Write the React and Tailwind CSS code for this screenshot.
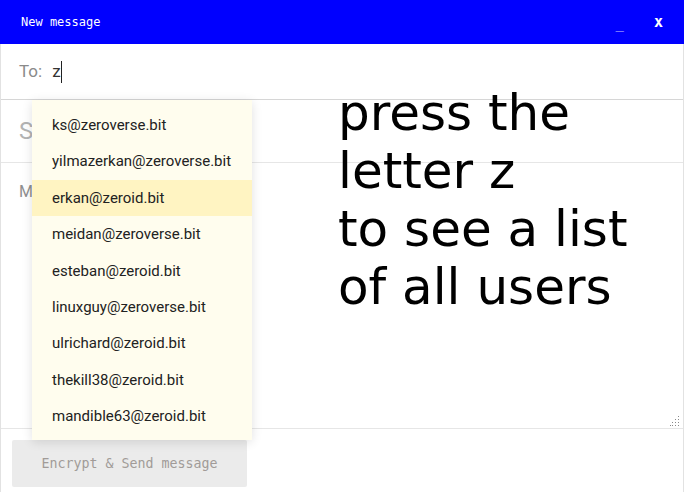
import React from "react";

const users = [
  "ks@zeroverse.bit",
  "yilmazerkan@zeroverse.bit",
  "erkan@zeroid.bit",
  "meidan@zeroverse.bit",
  "esteban@zeroid.bit",
  "linuxguy@zeroverse.bit",
  "ulrichard@zeroid.bit",
  "thekill38@zeroid.bit",
  "mandible63@zeroid.bit",
];

const mono = { fontFamily: '"DejaVu Sans Mono", monospace' };

export default function App() {
  return (
    <div className="relative w-[684px] h-[492px] bg-white overflow-hidden font-['Roboto',sans-serif]">
      {/* ── Header ── */}
      <div className="h-[44px] bg-[#0000ff] flex items-center justify-between pl-[21px] pr-[21px] text-white">
        <span className="text-[12px]" style={mono}>New message</span>
        <div className="flex items-center gap-[30px]" style={mono}>
          <span className="text-[14px] text-[#c9c0ff] leading-none pt-[2px]">_</span>
          <span className="text-[15px] font-bold leading-none">x</span>
        </div>
      </div>

      <div className="flex flex-col border-x border-[#e2e2e2] h-[448px]">
        {/* ── To ── */}
        <div className="h-[56px] flex items-center px-[18px] border-b border-[#d6d6d6] text-[17px]">
          <span className="text-[#8a8a8a]">To:</span>
          <span className="ml-[10px] text-[#333]">z</span>
          <span className="w-px h-[22px] bg-[#222]" />
        </div>

        {/* ── Subject ── */}
        <div className="h-[63px] flex items-center px-[18px] border-b border-[#e6e6e6] text-[24px] text-[#b3b3b3]">
          Subject
        </div>

        {/* ── Message ── */}
        <div className="relative flex-1 border-b border-[#e6e6e6] px-[18px] pt-[17px] text-[16px] text-[#8f8f8f]">
          Message
          <svg className="absolute right-[3px] bottom-[2px]" width="10" height="10" viewBox="0 0 10 10">
            <g fill="#8a8a8a">
              <rect x="8" y="0" width="1" height="1" />
              <rect x="5" y="3" width="1" height="1" />
              <rect x="8" y="3" width="1" height="1" />
              <rect x="2" y="6" width="1" height="1" />
              <rect x="5" y="6" width="1" height="1" />
              <rect x="8" y="6" width="1" height="1" />
              <rect x="0" y="9" width="1" height="1" />
              <rect x="2" y="9" width="1" height="1" />
              <rect x="5" y="9" width="1" height="1" />
              <rect x="8" y="9" width="1" height="1" />
            </g>
          </svg>
        </div>

        {/* ── Footer ── */}
        <div className="h-[63px] px-[11px] pt-[11px]">
          <button
            className="w-[235px] h-[47px] rounded-[2px] bg-[#ebebeb] text-[13.3px] text-[#a19b98]"
            style={mono}
          >
            Encrypt &amp; Send message
          </button>
        </div>
      </div>

      {/* ── Autocomplete dropdown ── */}
      <div className="absolute left-[32px] top-[100px] w-[220px] pt-[7px] pb-[5px] bg-[#fffdee] shadow-[0_2px_10px_rgba(0,0,0,0.12)]">
        {users.map((u) => (
          <div
            key={u}
            className={`h-[36.4px] flex items-center pl-[20px] text-[15px] text-[#222] ${
              u === "erkan@zeroid.bit" ? "bg-[#fff4c2]" : ""
            }`}
          >
            {u}
          </div>
        ))}
      </div>

      {/* ── Hint overlay ── */}
      <div className="absolute left-[338px] top-[84px] text-[50px] leading-[58px] text-black font-['DejaVu_Sans',sans-serif]">
        press the
        <br />
        letter z
        <br />
        to see a list
        <br />
        of all users
      </div>
    </div>
  );
}
